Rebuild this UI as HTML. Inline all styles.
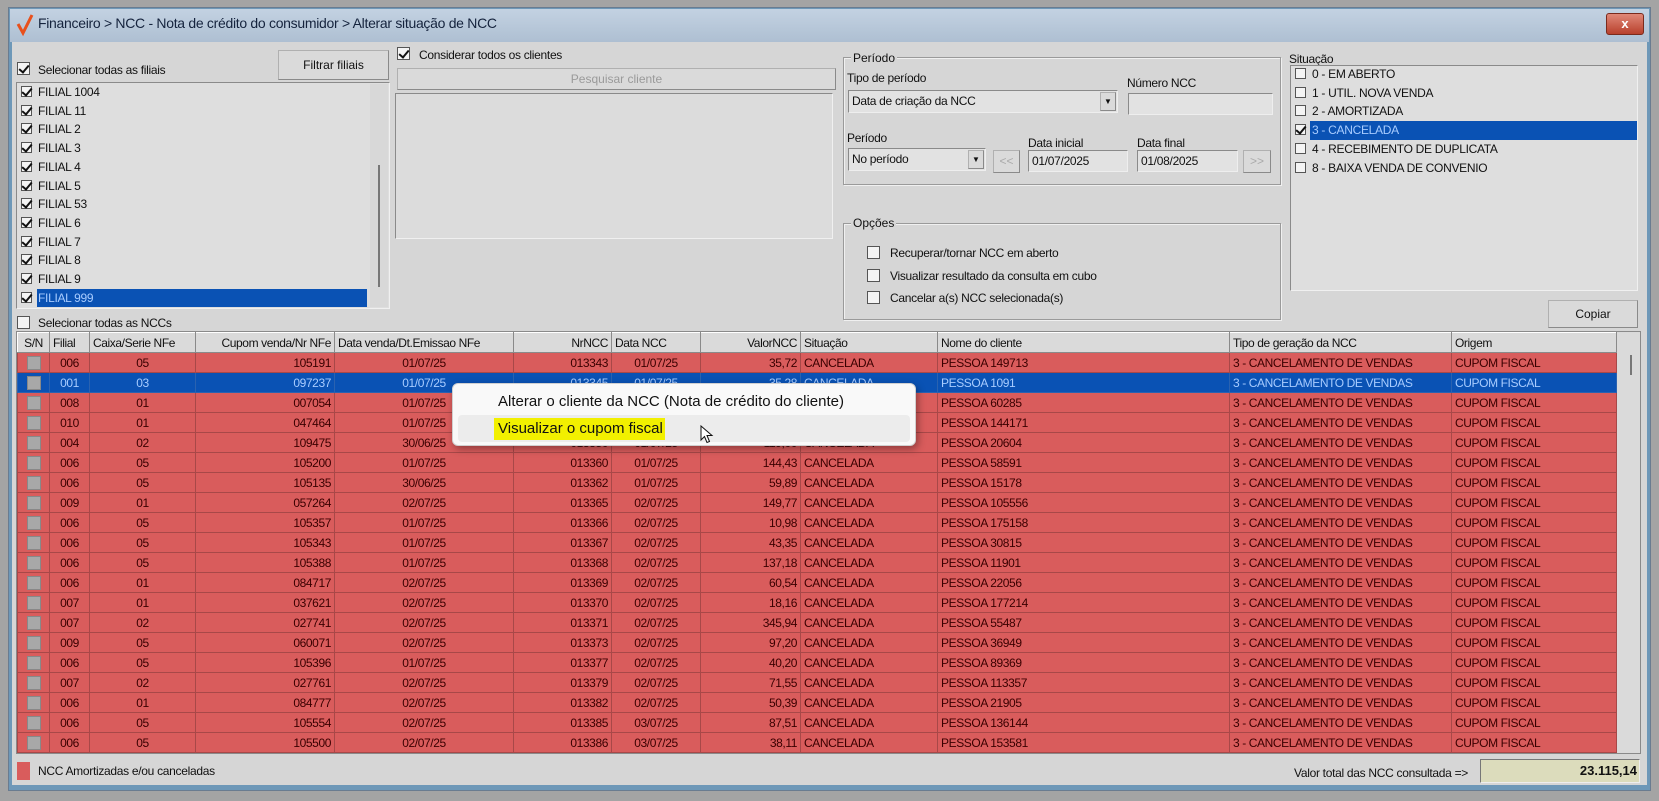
<!DOCTYPE html>
<html><head><meta charset="utf-8"><style>
*{box-sizing:border-box;margin:0;padding:0}
body{width:1659px;height:801px;background:#a4a4a4;position:relative;overflow:hidden;font-family:"Liberation Sans",sans-serif;font-size:12px;color:#111}
.a{position:absolute}
.t{position:absolute;white-space:nowrap;line-height:14px;letter-spacing:-0.3px}
.cb{position:absolute;width:13px;height:13px;border:1px solid #555;background:#f4f4f4}
.cb.k::after{content:"";position:absolute;left:3px;top:0px;width:4px;height:8px;border:solid #111;border-width:0 2px 2px 0;transform:rotate(40deg)}
.sm{width:11px;height:11px}
.sm.k::after{left:2px;top:-1px}
.btn{position:absolute;background:#dadada;border:1px solid #b0b0b0;border-right-color:#8a8a8a;border-bottom-color:#8a8a8a;text-align:center}
.inp{position:absolute;background:#e2e2e2;border:1px solid #8a8a8a;border-right-color:#eee;border-bottom-color:#eee;padding-left:3px;line-height:20px;letter-spacing:-0.3px}
.grp{position:absolute;border:1px solid #9a9a9a;box-shadow:1px 1px 0 #f0f0f0 inset,1px 1px 0 #f0f0f0}
.gl{position:absolute;background:#d6d6d6;padding:0 2px;line-height:14px}
table{border-collapse:collapse;table-layout:fixed;position:absolute;left:17px;top:332px}
td{height:20px;border:1px solid #a84848;padding:0 3px;white-space:nowrap;overflow:hidden;font-size:12px;color:#3a0000;letter-spacing:-0.4px}
tr.h td{background:#dadada;color:#111;border:1px solid #8a8a8a;border-top-color:#fff;border-left-color:#fff}
tr.r td{background:#d95c5c}
tr.s td{background:#0a52b4;color:#a8ccff;border-color:#2a62b0}
.c{text-align:center}.rt{text-align:right}
.sq{display:inline-block;width:14px;height:14px;background:#a8a8a8;border:1px solid #888;vertical-align:middle}
</style></head><body>
<div class="a" style="left:8px;top:7px;width:1643px;height:784px;background:#6e98b8;border:1px solid #6a7c90"></div>
<div class="a" style="left:10px;top:9px;width:1639px;height:33px;background:linear-gradient(#c3d2e2,#aebfd2)"></div>
<div class="a" style="left:12px;top:42px;width:1635px;height:743px;background:#d6d6d6"></div>
<svg class="a" style="left:16px;top:13px" width="18" height="24"><path d="M2 11 L7 20 L16 2" stroke="#e8501c" stroke-width="3" fill="none"/></svg>
<div class="t" style="left:38px;top:16px;font-size:14px;color:#15233d">Financeiro &gt; NCC - Nota de crédito do consumidor &gt; Alterar situação de NCC</div>
<div class="a" style="left:1606px;top:13px;width:38px;height:22px;background:linear-gradient(#e08878,#b8402c);border:1px solid #7a2a1c;border-radius:3px;color:#fff;font-weight:bold;text-align:center;line-height:20px;font-size:13px">x</div>

<div class="cb k" style="left:17px;top:62px"></div>
<div class="t" style="left:38px;top:63px">Selecionar todas as filiais</div>
<div class="btn" style="left:278px;top:50px;width:111px;height:30px;line-height:28px">Filtrar filiais</div>
<div class="a" style="left:16px;top:82px;width:374px;height:227px;background:#dedede;border:1px solid #8a8a8a;border-right-color:#f0f0f0;border-bottom-color:#f0f0f0"></div>
<div class="a" style="left:370px;top:84px;width:18px;height:223px;background:#d8d8d8"></div>
<div class="a" style="left:378px;top:165px;width:2px;height:122px;background:#777"></div>
<div class="a" style="left:37px;top:289px;width:330px;height:18px;background:#0a52b4"></div>
<div id="fl"></div>
<div class="cb" style="left:17px;top:316px"></div>
<div class="t" style="left:38px;top:316px">Selecionar todas as NCCs</div>

<div class="cb k" style="left:397px;top:47px"></div>
<div class="t" style="left:419px;top:48px">Considerar todos os clientes</div>
<div class="btn" style="left:397px;top:68px;width:439px;height:22px;line-height:20px;color:#9a9a9a">Pesquisar cliente</div>
<div class="a" style="left:395px;top:93px;width:438px;height:146px;background:#dcdcdc;border:1px solid #8a8a8a;border-right-color:#f0f0f0;border-bottom-color:#f0f0f0"></div>

<div class="grp" style="left:843px;top:57px;width:438px;height:128px"></div>
<div class="gl" style="left:851px;top:51px">Período</div>
<div class="t" style="left:847px;top:71px">Tipo de período</div>
<div class="inp" style="left:848px;top:90px;width:270px;height:23px">Data de criação da NCC</div>
<div class="btn" style="left:1100px;top:92px;width:16px;height:19px;font-size:8px;line-height:18px">▼</div>
<div class="t" style="left:1127px;top:76px">Número NCC</div>
<div class="inp" style="left:1128px;top:93px;width:145px;height:22px"></div>
<div class="t" style="left:847px;top:131px">Período</div>
<div class="inp" style="left:848px;top:148px;width:138px;height:23px">No período</div>
<div class="btn" style="left:968px;top:150px;width:16px;height:19px;font-size:8px;line-height:18px">▼</div>
<div class="btn" style="left:993px;top:150px;width:27px;height:23px;color:#aaa;line-height:21px">&lt;&lt;</div>
<div class="t" style="left:1028px;top:136px">Data inicial</div>
<div class="inp" style="left:1028px;top:150px;width:100px;height:22px">01/07/2025</div>
<div class="t" style="left:1137px;top:136px">Data final</div>
<div class="inp" style="left:1137px;top:150px;width:101px;height:22px">01/08/2025</div>
<div class="btn" style="left:1243px;top:150px;width:28px;height:23px;color:#aaa;line-height:21px">&gt;&gt;</div>

<div class="grp" style="left:843px;top:223px;width:438px;height:97px"></div>
<div class="gl" style="left:851px;top:216px">Opções</div>
<div class="cb" style="left:867px;top:246px"></div><div class="t" style="left:890px;top:246px">Recuperar/tornar NCC em aberto</div>
<div class="cb" style="left:867px;top:269px"></div><div class="t" style="left:890px;top:269px">Visualizar resultado da consulta em cubo</div>
<div class="cb" style="left:867px;top:291px"></div><div class="t" style="left:890px;top:291px">Cancelar a(s) NCC selecionada(s)</div>

<div class="t" style="left:1289px;top:52px">Situação</div>
<div class="a" style="left:1290px;top:65px;width:348px;height:226px;background:#dedede;border:1px solid #8a8a8a;border-right-color:#f0f0f0;border-bottom-color:#f0f0f0"></div>
<div class="a" style="left:1310px;top:121px;width:327px;height:19px;background:#0a52b4"></div>
<div id="sit"></div>
<div class="btn" style="left:1548px;top:300px;width:90px;height:28px;line-height:26px">Copiar</div>

<div class="a" style="left:16px;top:331px;width:1625px;height:423px;background:#dadada;border:1px solid #8a8a8a"></div>
<div class="a" style="left:1630px;top:355px;width:2px;height:20px;background:#777"></div>
<table id="g"></table>

<div class="a" style="left:452px;top:383px;width:464px;height:63px;background:#f9f9f9;border:1px solid #d0d0d0;border-radius:6px;box-shadow:2px 3px 8px rgba(0,0,0,.35)"></div>
<div class="t" style="left:498px;top:393px;font-size:15px;line-height:17px;color:#111;letter-spacing:0">Alterar o cliente da NCC (Nota de crédito do cliente)</div>
<div class="a" style="left:458px;top:415px;width:452px;height:27px;background:#ececec;border-radius:4px"></div>
<div class="a" style="left:494px;top:418px;width:171px;height:22px;background:#f2f000"></div>
<div class="t" style="left:498px;top:420px;font-size:15px;line-height:17px;color:#111;letter-spacing:0">Visualizar o cupom fiscal</div>
<svg class="a" style="left:700px;top:425px" width="14" height="20"><path d="M1 1 L1 15 L4.5 11.5 L7 17.5 L9.5 16.5 L7 10.5 L12 10.5 Z" fill="#fff" stroke="#111" stroke-width="1"/></svg>

<div class="a" style="left:17px;top:762px;width:13px;height:18px;background:#d95c5c"></div>
<div class="t" style="left:38px;top:764px">NCC Amortizadas e/ou canceladas</div>
<div class="t" style="left:1268px;top:766px;width:200px;text-align:right">Valor total das NCC consultada =&gt;</div>
<div class="a" style="left:1480px;top:759px;width:160px;height:24px;background:#dcdcbc;border:1px solid #777;border-right-color:#eee;border-bottom-color:#eee;text-align:right;font-weight:bold;line-height:22px;padding-right:2px;font-size:13px">23.115,14</div>

<script>
var f=["FILIAL 1004","FILIAL 11","FILIAL 2","FILIAL 3","FILIAL 4","FILIAL 5","FILIAL 53","FILIAL 6","FILIAL 7","FILIAL 8","FILIAL 9","FILIAL 999"],h="";
f.forEach(function(s,i){var y=85+i*18.7;h+='<div class="cb sm k" style="left:21px;top:'+(y+1)+'px"></div><div class="t" style="left:38px;top:'+y+'px;'+(i==11?'color:#a8ccff':'')+'">'+s+'</div>';});
document.getElementById('fl').innerHTML=h;
var s=["0 - EM ABERTO","1 - UTIL. NOVA VENDA","2 - AMORTIZADA","3 - CANCELADA","4 - RECEBIMENTO DE DUPLICATA","8 - BAIXA VENDA DE CONVENIO"];h="";
s.forEach(function(t,i){var y=[67,86,104,123,142,161][i];h+='<div class="cb sm'+(i==3?' k':'')+'" style="left:1295px;top:'+(y+1)+'px"></div><div class="t" style="left:1312px;top:'+y+'px;'+(i==3?'color:#a8ccff':'')+'">'+t+'</div>';});
document.getElementById('sit').innerHTML=h;
var w=[32,40,106,139,179,98,89,100,137,292,222,165];
var hd=["S/N","Filial","Caixa/Serie NFe","Cupom venda/Nr NFe","Data venda/Dt.Emissao NFe","NrNCC","Data NCC","ValorNCC","Situação","Nome do cliente","Tipo de geração da NCC","Origem"];
var al=["c","c","c","rt","c","rt","c","rt","","","",""];
var d=[["006","05","105191","01/07/25","013343","01/07/25","35,72","149713"],["001","03","097237","01/07/25","013345","01/07/25","35,28","1091"],["008","01","007054","01/07/25","013346","01/07/25","52,10","60285"],["010","01","047464","01/07/25","013348","01/07/25","64,30","144171"],["004","02","109475","30/06/25","013350","01/07/25","119,00","20604"],["006","05","105200","01/07/25","013360","01/07/25","144,43","58591"],["006","05","105135","30/06/25","013362","01/07/25","59,89","15178"],["009","01","057264","02/07/25","013365","02/07/25","149,77","105556"],["006","05","105357","01/07/25","013366","02/07/25","10,98","175158"],["006","05","105343","01/07/25","013367","02/07/25","43,35","30815"],["006","05","105388","01/07/25","013368","02/07/25","137,18","11901"],["006","01","084717","02/07/25","013369","02/07/25","60,54","22056"],["007","01","037621","02/07/25","013370","02/07/25","18,16","177214"],["007","02","027741","02/07/25","013371","02/07/25","345,94","55487"],["009","05","060071","02/07/25","013373","02/07/25","97,20","36949"],["006","05","105396","01/07/25","013377","02/07/25","40,20","89369"],["007","02","027761","02/07/25","013379","02/07/25","71,55","113357"],["006","01","084777","02/07/25","013382","02/07/25","50,39","21905"],["006","05","105554","02/07/25","013385","03/07/25","87,51","136144"],["006","05","105500","02/07/25","013386","03/07/25","38,11","153581"]];
h='<colgroup>'+w.map(function(x){return '<col style="width:'+x+'px">'}).join('')+'</colgroup><tr class="h">'+hd.map(function(x,i){return '<td class="'+(i<8&&i!=0&&al[i]=="rt"?"rt":(i==0?"c":""))+'">'+x+'</td>'}).join('')+'</tr>';
d.forEach(function(r,i){var c=['<span class="sq"></span>',r[0],r[1],r[2],r[3],r[4],r[5],r[6],"CANCELADA","PESSOA "+r[7],"3 - CANCELAMENTO DE VENDAS","CUPOM FISCAL"];
h+='<tr class="'+(i==1?'s':'r')+'">'+c.map(function(x,j){return '<td class="'+al[j]+'">'+x+'</td>'}).join('')+'</tr>';});
document.getElementById('g').innerHTML=h;
</script>
</body></html>
